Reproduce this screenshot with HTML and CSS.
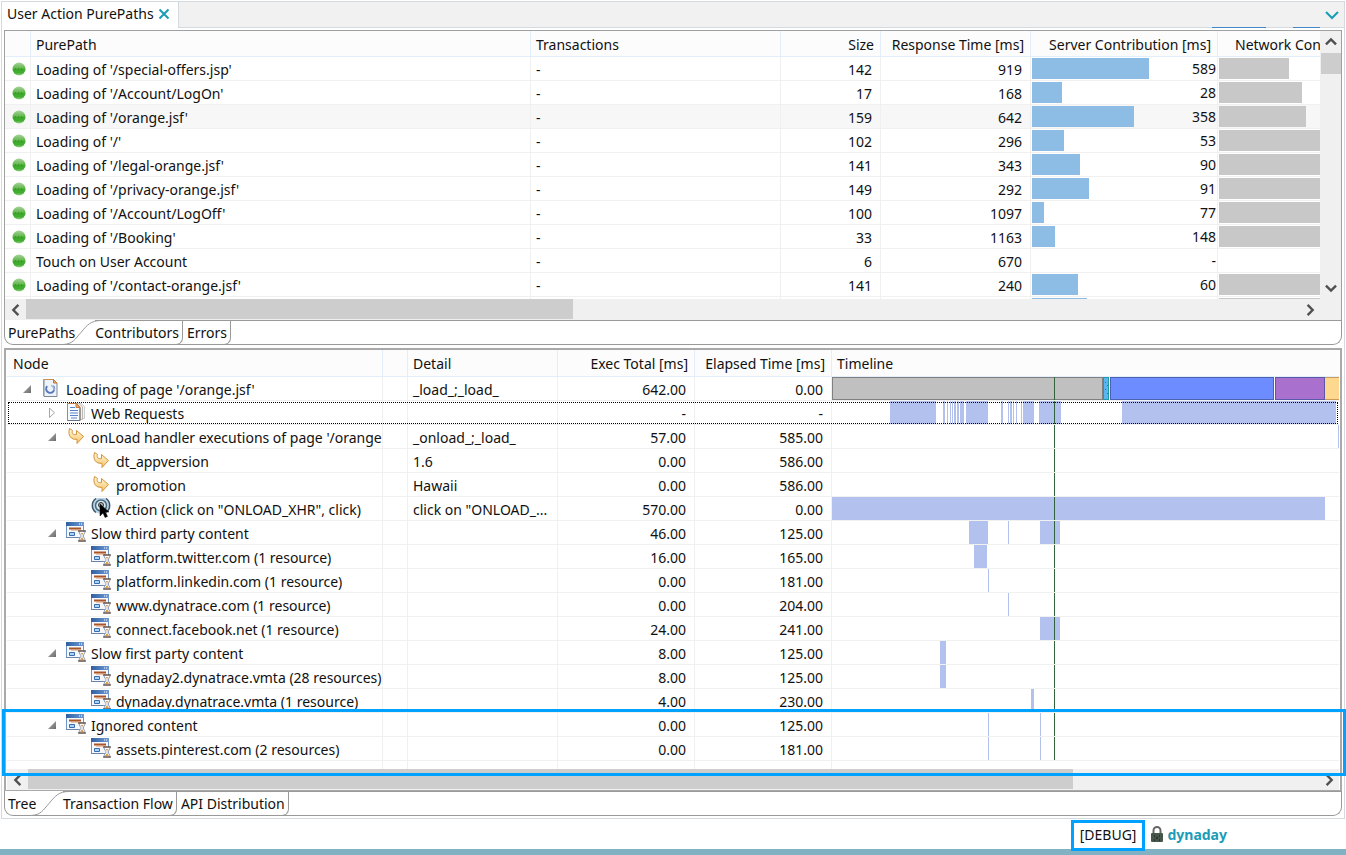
FILE: index.html
```html
<!DOCTYPE html>
<html lang="en">
<head>
  <meta charset="UTF-8">
  <meta name="viewport" content="width=device-width, initial-scale=1.0">
  <title>User Action PurePaths</title>
  <link rel="stylesheet" href="styles.css">
</head>
<body>

<!-- Icon sprite -->
<svg class="sprite" aria-hidden="true">
  <defs>
    <linearGradient id="gold" x1="0" y1="0" x2="0" y2="1">
      <stop offset="0" stop-color="#fffbe0"/><stop offset="1" stop-color="#f6c264"/>
    </linearGradient>
    <linearGradient id="green" x1="0" y1="0" x2="0" y2="1">
      <stop offset="0" stop-color="#a9d39b"/><stop offset="0.45" stop-color="#62b84f"/><stop offset="0.5" stop-color="#3ba82a"/><stop offset="0.8" stop-color="#43ad32"/><stop offset="1" stop-color="#9bd48c"/>
    </linearGradient>
    <linearGradient id="titlebar" x1="0" y1="0" x2="1" y2="0">
      <stop offset="0" stop-color="#2f5f9f"/><stop offset="1" stop-color="#6d9bd8"/>
    </linearGradient>
    <linearGradient id="twisty" x1="0" y1="0" x2="1" y2="1">
      <stop offset="0" stop-color="#b4b4b4"/><stop offset="1" stop-color="#6c6c6c"/>
    </linearGradient>
  </defs>
  <symbol id="ok" viewBox="0 0 14 14">
    <circle cx="7" cy="7" r="6.5" fill="url(#green)"/>
    <path d="M3 7h1M6 7h1M9 7h1" stroke="#2c8a1e"/>
  </symbol>
  <symbol id="open" viewBox="0 0 10 10"><path d="M9 1v8H1z" fill="url(#twisty)"/></symbol>
  <symbol id="closed" viewBox="0 0 10 10"><path d="M2.500 0v9.500L7.500 4.800z" fill="#fff" stroke="#a6a6a6"/></symbol>
  <symbol id="page" viewBox="0 0 20 20">
    <path d="M3 1.500h9.500l3.500 3.500v13.500H3z" fill="#eef3fa" stroke="#7d8793"/>
    <path d="M2.500 18V1.500h10l3.500 3.500" fill="none" stroke="#c98d5a"/>
    <path d="M12.500 1.500V5H16z" fill="#f0b070" stroke="#c0733a"/>
    <path d="M6.200 8.200A4 4 0 1 0 12 8" fill="none" stroke="#5576bd" stroke-width="2"/>
    <path d="M10 7.500a4 4 0 0 1 3 5" fill="none" stroke="#a4b9e2" stroke-width="1.500"/>
  </symbol>
  <symbol id="pages" viewBox="0 0 20 20">
    <path d="M8 1.500h7l3.500 3v12H8z" fill="#f5f5f5" stroke="#ccc"/>
    <path d="M5 1.500h8l3.500 3.500v12.500H5z" fill="#f1f1ee" stroke="#b9b9b9"/>
    <path d="M1.500 1.500h9l3.500 3.500v13.500H1.500z" fill="#f7faff" stroke="#c08050"/>
    <path d="M1.500 18.500H14V6" fill="none" stroke="#667482"/>
    <path d="M10 1.500V5.500h4z" fill="#f3ad6a" stroke="#c77a3c"/>
    <path d="M4 5.500h5M4 8.500h8M4 11h8M4 13.500h8M5 16h6" stroke="#5a86c8"/>
  </symbol>
  <symbol id="arrow" viewBox="0 0 20 20">
    <path d="M3.500 2.500l3 2c-1 3 .5 4.500 4 4V4.500l7 6-6.500 7v-4.200C5 14 1.500 9.500 3.500 2.500z" fill="url(#gold)" stroke="#d3933f"/>
  </symbol>
  <symbol id="action" viewBox="0 0 20 20">
    <circle cx="10" cy="7.500" r="8.500" fill="#b9d3e8"/>
    <path d="M5 14.500A8.500 8.500 0 0 1 5 .5M15 14.500A8.500 8.500 0 0 0 15 .5" fill="none" stroke="#3d5566" stroke-width="1.500"/>
    <circle cx="10" cy="7.500" r="5.500" fill="#dbe8f0" stroke="#4a6a7c" stroke-width="1.500"/>
    <circle cx="10" cy="7" r="2.500" fill="#aab8bf" stroke="#333"/>
    <path d="M9 6v12l3-3 2 4.500 2.500-1-2-4.500H18z" fill="#000" stroke="#111" stroke-width=".5"/>
  </symbol>
  <symbol id="slow" viewBox="0 0 20 20">
    <path d="M.5.5h17v15H.5z" fill="#f4f8fd" stroke="#7194c6"/>
    <path d="M0 0h18v4H0z" fill="url(#titlebar)"/>
    <path d="M13 2h1M15 2h1" stroke="#fff"/>
    <path d="M3 6.500h12" stroke="#a9552c" stroke-width="2"/>
    <path d="M5 8h10" stroke="#dc9560"/>
    <path d="M3.500 10.500h5v3h-5z" fill="#a9d4f5" stroke="#3a6cb0"/>
    <path d="M0 15.500h12" stroke="#6b84a8"/>
    <path d="M13 9h6c0 3-2 4-2 5s2 2 2 5h-6c0-3 2-4 2-5s-2-2-2-5z" fill="#fff" stroke="#8f9dae"/>
    <path d="M12 9h8M12 19h8" stroke="#4b2d18"/>
    <path d="M14.500 11h3l-1.500 2zM14 18l2-3 2 3z" fill="#d99a55"/>
  </symbol>
  <symbol id="chev-left" viewBox="0 0 10 10"><path d="M7 .8L2.800 5 7 9.200" fill="none" stroke="#505050" stroke-width="2"/></symbol>
  <symbol id="chev-right" viewBox="0 0 10 10"><path d="M3 .8L7.200 5 3 9.200" fill="none" stroke="#505050" stroke-width="2"/></symbol>
  <symbol id="chev-up" viewBox="0 0 10 10"><path d="M.8 7L5 2.800 9.200 7" fill="none" stroke="#505050" stroke-width="2"/></symbol>
  <symbol id="chev-down" viewBox="0 0 10 10"><path d="M.8 3L5 7.200 9.200 3" fill="none" stroke="#505050" stroke-width="2"/></symbol>
  <symbol id="slope" viewBox="0 0 38 25">
    <path d="M0 24.500C10 24 12 19 18 12.500 24 5 28 .5 38 .5" fill="none" stroke="#999"/>
  </symbol>
</svg>

<main class="view">
  <div class="view-tabs">
    <div class="view-tab">
      <span>User Action PurePaths</span>
      <button class="icon-button" aria-label="Close">
        <svg width="12" height="12" viewBox="0 0 12 12"><path d="M1.500 1.500l9 9M10.500 1.500l-9 9" stroke="#1a9cb7" stroke-width="2"/></svg>
      </button>
    </div>
    <div class="view-bar">
      <span class="mark mark-long"></span>
      <span class="mark"></span>
      <button class="icon-button" aria-label="View menu">
        <svg width="14" height="10" viewBox="0 0 14 10"><path d="M1 2l6 6 6-6" fill="none" stroke="#1a9cb7" stroke-width="2"/></svg>
      </button>
    </div>
  </div>

  <section class="panel paths">
    <div class="paths-body">
      <div class="pane">
        <table class="grid">
          <colgroup>
            <col class="c-status"><col class="c-path"><col class="c-trans"><col class="c-size"><col class="c-resp"><col class="c-server"><col>
          </colgroup>
          <thead>
            <tr><th></th><th>PurePath</th><th>Transactions</th><th class="num">Size</th><th class="num">Response Time [ms]</th><th class="num">Server Contribution [ms]</th><th class="network">Network Contribution [ms]</th></tr>
          </thead>
          <tbody>
            <tr><td class="status"><svg><use href="#ok"/></svg></td><td>Loading of '/special-offers.jsp'</td><td>-</td><td class="num">142</td><td class="num">919</td><td class="bar-cell"><div class="meter"><i style="width:117px"></i><span>589</span></div></td><td class="bar-cell"><div class="meter gray"><i style="width:70px"></i></div></td></tr>
            <tr><td class="status"><svg><use href="#ok"/></svg></td><td>Loading of '/Account/LogOn'</td><td>-</td><td class="num">17</td><td class="num">168</td><td class="bar-cell"><div class="meter"><i style="width:30px"></i><span>28</span></div></td><td class="bar-cell"><div class="meter gray"><i style="width:83px"></i></div></td></tr>
            <tr class="hot"><td class="status"><svg><use href="#ok"/></svg></td><td>Loading of '/orange.jsf'</td><td>-</td><td class="num">159</td><td class="num">642</td><td class="bar-cell"><div class="meter"><i style="width:102px"></i><span>358</span></div></td><td class="bar-cell"><div class="meter gray"><i style="width:87px"></i></div></td></tr>
            <tr><td class="status"><svg><use href="#ok"/></svg></td><td>Loading of '/'</td><td>-</td><td class="num">102</td><td class="num">296</td><td class="bar-cell"><div class="meter"><i style="width:32px"></i><span>53</span></div></td><td class="bar-cell"><div class="meter gray"><i style="width:100%"></i></div></td></tr>
            <tr><td class="status"><svg><use href="#ok"/></svg></td><td>Loading of '/legal-orange.jsf'</td><td>-</td><td class="num">141</td><td class="num">343</td><td class="bar-cell"><div class="meter"><i style="width:48px"></i><span>90</span></div></td><td class="bar-cell"><div class="meter gray"><i style="width:100%"></i></div></td></tr>
            <tr><td class="status"><svg><use href="#ok"/></svg></td><td>Loading of '/privacy-orange.jsf'</td><td>-</td><td class="num">149</td><td class="num">292</td><td class="bar-cell"><div class="meter"><i style="width:57px"></i><span>91</span></div></td><td class="bar-cell"><div class="meter gray"><i style="width:100%"></i></div></td></tr>
            <tr><td class="status"><svg><use href="#ok"/></svg></td><td>Loading of '/Account/LogOff'</td><td>-</td><td class="num">100</td><td class="num">1097</td><td class="bar-cell"><div class="meter"><i style="width:12px"></i><span>77</span></div></td><td class="bar-cell"><div class="meter gray"><i style="width:100%"></i></div></td></tr>
            <tr><td class="status"><svg><use href="#ok"/></svg></td><td>Loading of '/Booking'</td><td>-</td><td class="num">33</td><td class="num">1163</td><td class="bar-cell"><div class="meter"><i style="width:23px"></i><span>148</span></div></td><td class="bar-cell"><div class="meter gray"><i style="width:100%"></i></div></td></tr>
            <tr><td class="status"><svg><use href="#ok"/></svg></td><td>Touch on User Account</td><td>-</td><td class="num">6</td><td class="num">670</td><td class="bar-cell"><div class="meter"><span>-</span></div></td><td class="bar-cell"></td></tr>
            <tr><td class="status"><svg><use href="#ok"/></svg></td><td>Loading of '/contact-orange.jsf'</td><td>-</td><td class="num">141</td><td class="num">240</td><td class="bar-cell"><div class="meter"><i style="width:46px"></i><span>60</span></div></td><td class="bar-cell"><div class="meter gray"><i style="width:100%"></i></div></td></tr>
            <tr><td></td><td></td><td></td><td></td><td></td><td class="bar-cell"><div class="meter"><i style="width:55px"></i></div></td><td class="bar-cell"><div class="meter gray"><i style="width:100%"></i></div></td></tr>
          </tbody>
        </table>
      </div>
      <div class="vscroll">
        <button class="icon-button" aria-label="Scroll up"><svg width="12" height="12"><use href="#chev-up"/></svg></button>
        <div class="vtrack"><div class="vthumb"></div></div>
        <button class="icon-button" aria-label="Scroll down"><svg width="12" height="12"><use href="#chev-down"/></svg></button>
      </div>
    </div>
    <div class="hscroll">
      <button class="icon-button" aria-label="Scroll left"><svg width="12" height="12"><use href="#chev-left"/></svg></button>
      <div class="htrack"><div class="hthumb" style="width:43%"></div></div>
      <button class="icon-button" aria-label="Scroll right"><svg width="12" height="12"><use href="#chev-right"/></svg></button>
    </div>
  </section>
  <div class="tabs">
    <button class="tab selected">PurePaths</button>
    <svg class="slope"><use href="#slope"/></svg>
    <button class="tab first">Contributors</button>
    <button class="tab">Errors</button>
    <div class="tabs-rest"></div>
  </div>

  <section class="panel tree">
    <table class="grid">
      <colgroup>
        <col class="c-node"><col class="c-gap"><col class="c-detail"><col class="c-time"><col class="c-time"><col>
      </colgroup>
      <thead>
        <tr><th>Node</th><th></th><th>Detail</th><th class="num">Exec Total [ms]</th><th class="num">Elapsed Time [ms]</th><th>Timeline</th></tr>
      </thead>
      <tbody>
        <tr><td><div class="node"><svg class="twist"><use href="#open"/></svg><svg class="icon"><use href="#page"/></svg>Loading of page '/orange.jsf'</div></td><td></td><td>_load_;_load_</td><td class="num">642.00</td><td class="num">0.00</td>
          <td class="line"><svg viewBox="0 0 507 23" preserveAspectRatio="none">
            <rect x="0.5" y="0.5" width="270" height="22" fill="#c0c0c0" stroke="#808080"/>
            <rect x="271.5" y="0.5" width="5" height="22" fill="#5bb5f0" stroke="#1b9aa8"/>
            <path d="M273 5h1M275 8h1M273 12h1M275 16h1" stroke="#2677a8"/>
            <rect x="278.500" y="0.5" width="163" height="22" fill="#6d8cff" stroke="#4b62b3"/>
            <rect x="443.500" y="0.5" width="49" height="22" fill="#a970cd" stroke="#5a58a8"/>
            <rect x="493" y="0" width="14" height="23" fill="#ffd890"/>
            <path d="M493 .5h14M493 22.500h14" stroke="#cf9a55"/>
            <rect class="now" x="222" width="1" height="23"/></svg></td></tr>
        <tr class="focused"><td><div class="node l1"><svg class="twist"><use href="#closed"/></svg><svg class="icon"><use href="#pages"/></svg>Web Requests</div></td><td></td><td></td><td class="num">-</td><td class="num">-</td>
          <td class="line"><svg viewBox="0 0 507 23" preserveAspectRatio="none">
            <path d="M58 0h46v23h-46zM111 0h2v23h-2zM115 0h1v23h-1zM118 0h1v23h-1zM120 0h1v23h-1zM122 0h2v23h-2zM125 0h2v23h-2zM128 0h4v23h-4zM134 0h22v23h-22zM169 0h2v23h-2zM176 0h1v23h-1zM178 0h2v23h-2zM181 0h1v23h-1zM184 0h1v23h-1zM189 0h1v23h-1zM191 0h11v23h-11zM207 0h22v23h-22zM290 0h214v23h-214z"/>
            <rect class="now" x="222" width="1" height="23"/></svg></td></tr>
        <tr><td><div class="node l1"><svg class="twist"><use href="#open"/></svg><svg class="icon"><use href="#arrow"/></svg>onLoad handler executions of page '/orange.jsf'</div></td><td></td><td>_onload_;_load_</td><td class="num">57.00</td><td class="num">585.00</td>
          <td class="line"><svg viewBox="0 0 507 23" preserveAspectRatio="none"><rect x="506" width="1" height="23"/><rect class="now" x="222" width="1" height="23"/></svg></td></tr>
        <tr><td><div class="node l2"><svg class="icon"><use href="#arrow"/></svg>dt_appversion</div></td><td></td><td>1.6</td><td class="num">0.00</td><td class="num">586.00</td>
          <td class="line"><svg viewBox="0 0 507 23" preserveAspectRatio="none"><rect class="now" x="222" width="1" height="23"/></svg></td></tr>
        <tr><td><div class="node l2"><svg class="icon"><use href="#arrow"/></svg>promotion</div></td><td></td><td>Hawaii</td><td class="num">0.00</td><td class="num">586.00</td>
          <td class="line"><svg viewBox="0 0 507 23" preserveAspectRatio="none"><rect class="now" x="222" width="1" height="23"/></svg></td></tr>
        <tr><td><div class="node l2"><svg class="icon"><use href="#action"/></svg>Action (click on "ONLOAD_XHR", click)</div></td><td></td><td>click on "ONLOAD_...</td><td class="num">570.00</td><td class="num">0.00</td>
          <td class="line"><svg viewBox="0 0 507 23" preserveAspectRatio="none"><rect width="493" height="23"/><rect class="now" x="222" width="1" height="23"/></svg></td></tr>
        <tr><td><div class="node l1"><svg class="twist"><use href="#open"/></svg><svg class="icon"><use href="#slow"/></svg>Slow third party content</div></td><td></td><td></td><td class="num">46.00</td><td class="num">125.00</td>
          <td class="line"><svg viewBox="0 0 507 23" preserveAspectRatio="none"><rect x="137" width="19" height="23"/><rect x="176" width="1" height="23"/><rect x="208" width="20" height="23"/><rect class="now" x="222" width="1" height="23"/></svg></td></tr>
        <tr><td><div class="node l2"><svg class="icon"><use href="#slow"/></svg>platform.twitter.com (1 resource)</div></td><td></td><td></td><td class="num">16.00</td><td class="num">165.00</td>
          <td class="line"><svg viewBox="0 0 507 23" preserveAspectRatio="none"><rect x="142" width="13" height="23"/><rect class="now" x="222" width="1" height="23"/></svg></td></tr>
        <tr><td><div class="node l2"><svg class="icon"><use href="#slow"/></svg>platform.linkedin.com (1 resource)</div></td><td></td><td></td><td class="num">0.00</td><td class="num">181.00</td>
          <td class="line"><svg viewBox="0 0 507 23" preserveAspectRatio="none"><rect x="156" width="1" height="23"/><rect class="now" x="222" width="1" height="23"/></svg></td></tr>
        <tr><td><div class="node l2"><svg class="icon"><use href="#slow"/></svg>www.dynatrace.com (1 resource)</div></td><td></td><td></td><td class="num">0.00</td><td class="num">204.00</td>
          <td class="line"><svg viewBox="0 0 507 23" preserveAspectRatio="none"><rect x="176" width="1" height="23"/><rect class="now" x="222" width="1" height="23"/></svg></td></tr>
        <tr><td><div class="node l2"><svg class="icon"><use href="#slow"/></svg>connect.facebook.net (1 resource)</div></td><td></td><td></td><td class="num">24.00</td><td class="num">241.00</td>
          <td class="line"><svg viewBox="0 0 507 23" preserveAspectRatio="none"><rect x="208" width="20" height="23"/><rect class="now" x="222" width="1" height="23"/></svg></td></tr>
        <tr><td><div class="node l1"><svg class="twist"><use href="#open"/></svg><svg class="icon"><use href="#slow"/></svg>Slow first party content</div></td><td></td><td></td><td class="num">8.00</td><td class="num">125.00</td>
          <td class="line"><svg viewBox="0 0 507 23" preserveAspectRatio="none"><rect x="108" width="6" height="23"/><rect class="now" x="222" width="1" height="23"/></svg></td></tr>
        <tr><td><div class="node l2"><svg class="icon"><use href="#slow"/></svg>dynaday2.dynatrace.vmta (28 resources)</div></td><td></td><td></td><td class="num">8.00</td><td class="num">125.00</td>
          <td class="line"><svg viewBox="0 0 507 23" preserveAspectRatio="none"><rect x="108" width="6" height="23"/><rect class="now" x="222" width="1" height="23"/></svg></td></tr>
        <tr><td><div class="node l2"><svg class="icon"><use href="#slow"/></svg>dynaday.dynatrace.vmta (1 resource)</div></td><td></td><td></td><td class="num">4.00</td><td class="num">230.00</td>
          <td class="line"><svg viewBox="0 0 507 23" preserveAspectRatio="none"><rect x="199" width="3" height="23"/><rect class="now" x="222" width="1" height="23"/></svg></td></tr>
        <tr><td><div class="node l1"><svg class="twist"><use href="#open"/></svg><svg class="icon"><use href="#slow"/></svg>Ignored content</div></td><td></td><td></td><td class="num">0.00</td><td class="num">125.00</td>
          <td class="line"><svg viewBox="0 0 507 23" preserveAspectRatio="none"><rect x="156" width="1" height="23"/><rect x="208" width="1" height="23"/><rect class="now" x="222" width="1" height="23"/></svg></td></tr>
        <tr><td><div class="node l2"><svg class="icon"><use href="#slow"/></svg>assets.pinterest.com (2 resources)</div></td><td></td><td></td><td class="num">0.00</td><td class="num">181.00</td>
          <td class="line"><svg viewBox="0 0 507 23" preserveAspectRatio="none"><rect x="156" width="1" height="23"/><rect x="208" width="1" height="23"/><rect class="now" x="222" width="1" height="23"/></svg></td></tr>
        <tr class="filler"><td></td><td></td><td></td><td></td><td></td><td></td></tr>
      </tbody>
    </table>
    <div class="hscroll">
      <button class="icon-button" aria-label="Scroll left"><svg width="12" height="12"><use href="#chev-left"/></svg></button>
      <div class="htrack"><div class="hthumb" style="width:81%"></div></div>
      <button class="icon-button" aria-label="Scroll right"><svg width="12" height="12"><use href="#chev-right"/></svg></button>
    </div>
    <div class="callout"></div>
  </section>
  <div class="tabs">
    <button class="tab selected">Tree</button>
    <svg class="slope"><use href="#slope"/></svg>
    <button class="tab first">Transaction Flow</button>
    <button class="tab">API Distribution</button>
    <div class="tabs-rest"></div>
  </div>
</main>

<footer class="statusbar">
  <span class="debug">[DEBUG]</span>
  <svg class="lock" width="14" height="16" viewBox="0 0 14 16">
    <path d="M3.500 8V4.500a3.500 3.500 0 0 1 7 0V8" fill="none" stroke="#666" stroke-width="2"/>
    <rect x="1" y="7" width="12" height="9" rx="1" fill="#46564a"/>
    <path d="M4 10h1M9 10h1M6 12h2M4 14h1M9 14h1" stroke="#101020" stroke-width="1"/>
  </svg>
  <span class="user">dynaday</span>
</footer>

</body>
</html>
```
FILE: styles.css
```css
* { box-sizing: border-box; }
body { margin: 0; min-height: 100vh; display: flex; flex-direction: column; background: #fff; color: #111; font: 14px/20px "Noto Sans", "Open Sans", sans-serif; }
.sprite { position: absolute; width: 0; height: 0; }
button { font: inherit; color: inherit; }
.icon-button { display: flex; align-items: center; justify-content: center; padding: 0; border: 0; background: none; cursor: pointer; }

/* View frame */
.view { margin: 1px 1px 0; border: 1px solid #d5dade; padding-bottom: 2px; }
.view-tabs { display: flex; height: 26px; margin-bottom: 2px; }
.view-tab { display: flex; align-items: center; gap: 4px; width: 176px; padding: 0 0 2px 5px; white-space: nowrap; }
.view-bar { flex: 1; display: flex; justify-content: flex-end; background: #f1f1f1; border-left: 1px solid #d5dade; border-bottom: 1px solid #d5dade; }
.view-bar .icon-button { width: 24px; }
.mark { align-self: flex-end; width: 27px; height: 1px; margin-bottom: -1px; background: #3f87c5; }
.mark-long { width: 54px; margin-right: 27px; }

.panel { margin: 0 2px; border: 1px solid #a0a0a0; }

/* Tables */
.grid { width: 100%; table-layout: fixed; border-collapse: separate; border-spacing: 0; }
.grid th, .grid td { height: 24px; padding: 2px 5px 0; overflow: hidden; white-space: nowrap; text-align: left; font-weight: normal; line-height: 20px; border-right: 1px solid #f0f0f0; border-bottom: 1px solid #f0f0f0; }
.grid th { height: 26px; background: #fcfcfc; border-color: #e3eefb; }
.grid th:last-child, .grid td:last-child { border-right: 0; }
.grid .num { text-align: right; padding: 2px 8px 0 0; }
.grid th.num { padding-right: 6px; }
.grid th.network { padding-left: 17px; }
.hot td { background: #f7f7f7; }
.c-status { width: 26px; }
.c-path { width: 500px; }
.c-trans { width: 250px; }
.c-size { width: 100px; }
.c-resp { width: 150px; }
.c-server { width: 187px; }
.c-node { width: 376px; }
.c-gap { width: 25px; }
.c-detail { width: 150px; }
.c-time { width: 137px; }

.grid .status { padding: 0 0 0 7px; }
.status svg { display: block; width: 14px; height: 14px; }
.grid .bar-cell { padding: 0 0 0 1px; }
.meter { display: grid; height: 21px; }
.meter > * { grid-area: 1 / 1; }
.meter i { background: #8dbde5; }
.meter.gray i { background: #c8c8c8; }
.meter span { justify-self: end; line-height: 21px; padding-right: 1px; }

/* Scroll bars */
.pane { height: 268px; overflow: hidden; }
.paths-body { display: grid; grid-template-columns: minmax(0, 1fr) 21px; }
.vscroll { display: flex; flex-direction: column; background: #f0f0f0; }
.vscroll .icon-button { height: 22px; }
.vtrack { flex: 1; }
.vthumb { height: 21px; margin-left: 1px; background: #cdcdcd; }
.hscroll { display: flex; height: 21px; background: #f0f0f0; }
.hscroll .icon-button { width: 21px; }
.paths .hscroll { padding-right: 21px; }
.htrack { flex: 1; }
.hthumb { height: 20px; background: #cdcdcd; }

/* Tree */
.tree { position: relative; margin-top: 3px; padding: 0 1px; border-width: 2px; border-color: #a9a9a9; }
.tree .grid th { height: 27px; }
.tree .grid th:first-child { padding-left: 6px; }
.tree .grid td:first-child { padding: 0 0 0 5px; }
.node { display: flex; align-items: flex-start; height: 23px; padding-left: 10px; line-height: 25px; }
.node.l1 { padding-left: 35px; }
.node.l2 { padding-left: 79px; }
.twist { flex: none; width: 10px; height: 10px; margin: 7px 9px 0 0; }
.icon { flex: none; width: 20px; height: 20px; margin: 1px 5px 0 0; }
.tree .grid .line { padding: 0; }
.line svg { display: block; width: 100%; height: 23px; fill: #b2c1ed; shape-rendering: crispEdges; }
.line .now { fill: #33633a; }
.focused { outline: 1px dotted #000; outline-offset: -2px; }
.tree .grid .filler td { height: 8px; padding: 0; border-bottom: 0; }
.callout { position: absolute; left: -4px; right: -6px; bottom: 14px; height: 67px; border: 3px solid #00a2ff; pointer-events: none; }

/* Bottom tabs */
.tabs { display: flex; height: 25px; margin: -1px 2px 0; border: solid #999; border-width: 0 1px 1px; border-radius: 0 0 9px 9px; position: relative; background: #fff; }
.tab { height: 25px; padding: 0 3px 0 4px; border: 1px solid #999; border-left: 0; border-radius: 0 0 7px 0; background: none; white-space: nowrap; cursor: pointer; }
.tab.selected { min-width: 38px; padding: 0 0 0 3px; border: 0; text-align: left; }
.tab.first { padding-left: 0; }
.slope { flex: none; width: 38px; height: 25px; margin: 0 -6px 0 -12px; }
.tabs-rest { flex: 1; border-top: 1px solid #999; }

/* Status bar */
.statusbar { display: flex; justify-content: flex-end; align-items: center; flex: 1; padding: 1px 119px 0 0; border-bottom: 6px solid #83b1c4; }
.debug { position: relative; height: 31px; margin-bottom: -2px; padding: 0 6px; border: 3px solid #00a2ff; line-height: 24px; }
.lock { margin: 0 3px 2px 5px; }
.user { color: #1a9cb7; font-weight: bold; }
```
